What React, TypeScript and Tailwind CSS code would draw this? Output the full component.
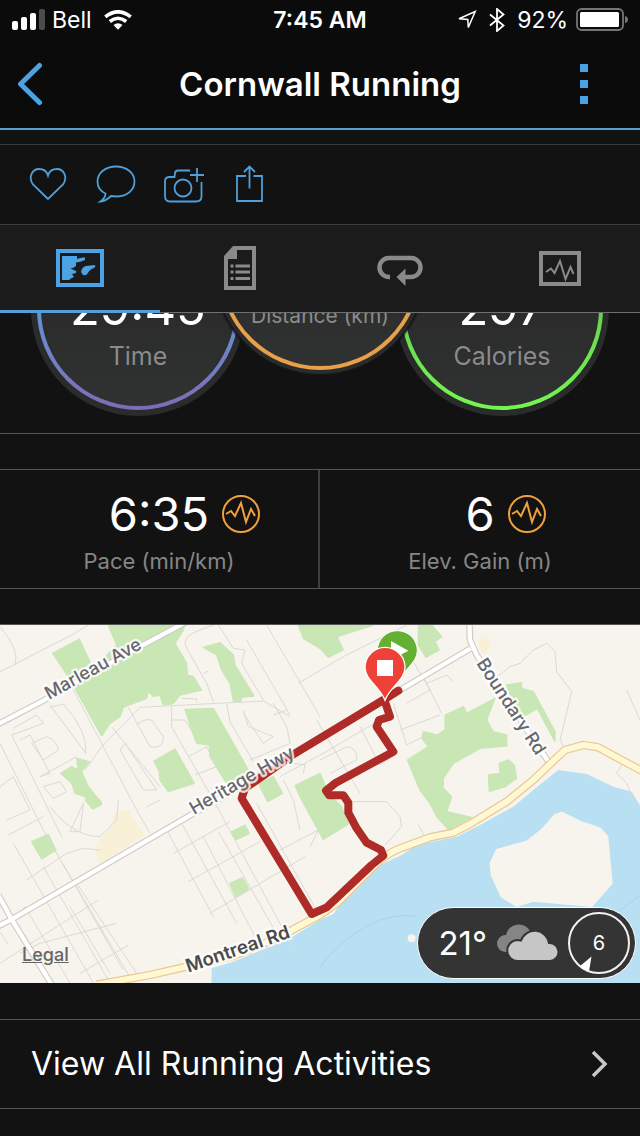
import { useState } from 'react'
import type { ReactNode } from 'react'
import { clsx } from 'clsx'

const PULSE_POINTS = '5,20 10,17 14,22 20,9 25,28 30,15 34,22'

const PARKS = [
  '158,100 238,57 272,130 205,170',
  '325,15 553,15 550,30 525,70 560,130 562,165 580,170 605,210 540,225 520,250 490,255 480,225 460,230 445,213 440,235 400,250 370,262 360,290 330,310 305,348 225,205 350,75',
  '610,82 660,68 700,105 705,135 762,228 725,232 722,245 700,243 690,190 665,150 650,105',
  '555,268 640,265 745,450 735,480 680,490 630,410 628,375 590,370 575,330',
  '462,423 525,387 583,490 505,515 480,480 478,455',
  '182,460 215,440 235,450 230,415 268,425 245,455 265,500 305,550 275,565 255,530 225,520 215,490',
  '775,490 820,470 848,520 803,545',
  '885,497 960,460 985,520 1025,560 1045,612 970,658 905,540',
  '895,15 1120,15 1012,50 1030,90 985,112 960,85 910,55',
  '1255,15 1295,15 1325,50 1305,65 1318,90 1278,112 1255,75',
  '1222,420 1285,380 1265,355 1270,335 1310,345 1335,330 1335,285 1390,260 1400,280 1485,235 1460,300 1480,335 1520,345 1520,378 1440,385 1360,430 1330,475 1330,505 1355,530 1340,575 1415,592 1345,628 1310,590 1290,550 1260,510',
  '1520,195 1565,188 1565,205 1600,215 1665,335 1665,365 1612,265 1570,290 1530,225',
  '1465,465 1500,460 1498,430 1525,420 1543,435 1550,475 1515,500 1468,515',
  '95,665 145,643 168,690 125,717',
  '255,540 300,540 305,553 280,567',
  '695,635 735,615 748,640 708,660',
  '690,790 728,773 747,808 707,830',
]

const STREETS = [
  'M0 155 L40 135 L215 45 L265 15',
  'M0 20 Q60 90 45 135',
  'M210 190 L410 570 L450 640',
  'M150 255 L258 400 Q262 330 190 252 L150 262',
  'M40 325 L110 285 L130 310 L35 345 L185 650',
  'M60 360 L90 345 L150 460 L120 470 L230 410',
  'M95 370 L140 350 Q170 360 175 390 L130 420 Z',
  'M255 450 L305 380 L420 262 L790 243 L870 290',
  'M335 320 L480 500',
  'M385 262 L450 380 Q490 390 490 350 L455 300 Q430 295 410 315',
  'M515 258 L515 320 L640 540 L880 985',
  'M515 300 L555 300 L580 340',
  'M360 390 L375 370 L470 510 L430 510 Z',
  'M0 370 L140 650 L400 1089',
  'M0 500 L40 470 L90 570 L20 600',
  'M130 500 L180 485 L200 515 L160 535 Z',
  'M560 85 Q540 50 600 30 L640 15',
  'M560 85 L620 190 L640 245',
  'M655 15 L700 85 L735 90 L725 130 L790 240',
  'M740 60 L870 285',
  'M800 15 L960 290',
  'M680 250 L690 305 L760 425',
  'M730 270 L745 320 L820 350 L790 370 L730 280',
  'M750 420 L870 370 L860 320 L820 250',
  'M820 285 L860 270',
  'M895 190 L1030 110 L1220 15',
  'M545 235 L590 237 L590 248',
  'M610 160 L625 153',
  'M565 410 L620 380 L650 440 L585 465',
  'M840 470 L970 400 L1140 300',
  'M850 480 L880 540 L900 630',
  'M880 430 L915 435 L910 460',
  'M950 300 L1080 520',
  'M960 420 L1040 380 Q1075 385 1070 420 L990 460',
  'M1080 320 L1140 435 L1170 415',
  'M1180 250 L1220 375 L1270 350',
  'M1200 330 L1320 285',
  'M1270 170 L1325 280',
  'M1220 250 L1290 210 L1240 125',
  'M1280 190 L1340 165 L1360 185',
  'M1480 180 L1530 140 L1560 130 L1600 90 L1640 70 L1665 95 L1670 155 L1715 215 L1680 360 L1690 380',
  'M1880 210 L1920 300',
  'M1865 435 L1850 460 L1880 490 L1900 540',
  'M1050 545 L1160 545 L1200 590 L1205 620 L1155 675',
  'M1255 615 L1275 650',
  'M25 645 L130 590',
  'M40 670 L100 775 L280 1089',
  'M80 780 L200 700 L250 685 L300 690',
  'M150 560 Q220 650 300 650 L350 600 L355 540',
  'M210 635 L250 550 L240 635 Z',
  'M130 740 L330 1089',
  'M185 725 L370 1050',
  'M75 860 L210 1089',
  'M40 910 L75 860',
  'M0 1030 L295 840',
  'M60 1000 L120 970 L350 910',
  'M240 1060 L385 975',
  'M210 860 L330 1060',
  'M230 790 L410 1060',
  'M0 935 L25 975',
  'M440 560 L480 540',
  'M520 700 L690 605',
  'M565 785 L780 665',
  'M630 880 L915 710',
  'M500 630 L640 890',
  'M545 610 L710 910',
  'M610 650 L770 960',
  'M655 635 L835 950',
  'M770 550 L960 890',
  'M840 690 L955 630 L930 680',
]

const ROUTE =
  'M1195 212 L1150 240 L885 400 L735 505 L725 535 L935 882 L980 862 L1115 735 L1150 707 L1143 690 L1100 668 L1070 625 L1045 578 L1045 548 L1030 526 L988 526 L978 512 L1005 490 L1180 395 L1130 320 L1137 300 L1170 290 L1155 245'

const MONTREAL_RD =
  'M290 1094 L450 1065 L550 1042 L700 1008 L830 955 L960 885 L1010 850 L1120 740 Q1160 700 1200 685 L1290 652 L1360 638 L1410 612 L1520 545 L1600 480 L1650 432 L1695 390 L1750 375 L1795 382 L1850 412 L1930 455'

const WHITE_ROADS = [
  'M-5 312 L130 242 L420 80 L560 5',
  'M-5 918 L35 898 L560 592 L740 490 L1150 240 L1412 85',
  'M-5 825 L35 898 L155 1094',
  'M1408 5 L1410 60 L1430 105 L1650 432',
]

function StatusBar() {
  return (
    <div className="grid grid-cols-[1fr_auto_1fr] items-center h-10 px-3 text-[23px] leading-7">
      <div className="flex items-center gap-1.5">
        <svg width="34" height="22" viewBox="0 0 34 22" aria-hidden="true">
          <rect x="0" y="12" width="6" height="9" rx="2" fill="#fff" />
          <rect x="9" y="8" width="6" height="13" rx="2" fill="#fff" />
          <rect x="18" y="4" width="6" height="17" rx="2" fill="#fff" />
          <rect x="27" y="0" width="6" height="21" rx="2" fill="#4c4c4c" />
        </svg>
        <span>Bell</span>
        <svg className="ml-1.5" width="28" height="20" viewBox="0 0 28 20" fill="none" stroke="#fff" strokeWidth="3.6" aria-hidden="true">
          <path d="M1.3 6.8 Q14 -3.2 26.7 6.8" />
          <path d="M5.8 11.5 Q14 5 22.2 11.5" />
          <path d="M9.5 15 Q14 11.5 18.5 15 L14 19.8 Z" fill="#fff" stroke="none" />
        </svg>
      </div>
      <span className="font-semibold">7:45 AM</span>
      <div className="flex items-center justify-end gap-2">
        <svg width="20" height="20" viewBox="0 0 20 20" fill="none" stroke="#fff" strokeWidth="1.5" aria-hidden="true">
          <path d="M18.2 1.5 L11.3 17.5 L10.8 9.5 L2 8.8 Z" />
        </svg>
        <svg width="24" height="24" viewBox="0 0 24 24" fill="none" stroke="#fff" strokeWidth="1.8" aria-hidden="true">
          <path d="M5 6.5 L18.5 17.5 L12 23 V1 L18.5 6.5 L5 17.5" />
        </svg>
        <span>92%</span>
        <svg width="52" height="24" viewBox="0 0 52 24" aria-hidden="true">
          <rect x="1" y="1" width="46" height="21" rx="4.5" fill="none" stroke="#757575" strokeWidth="1.8" />
          <rect x="4" y="4" width="39" height="15" rx="1.5" fill="#fff" />
          <path d="M49 8 Q52 9 52 11.5 Q52 14 49 15 Z" fill="#757575" />
        </svg>
      </div>
    </div>
  )
}

const ACTIONS: { label: string; icon: ReactNode }[] = [
  { label: 'Like', icon: <path d="M20 34 L5 19.500 C0 12.500 4 4 11 4 C16 4 19 7 20 10.500 C21 7 24 4 29 4 C36 4 40 12.500 35 19.500 Z" /> },
  {
    label: 'Comment',
    icon: <path d="M20 1.5 C30.500 1.5 38.500 8 38.500 16.500 C38.500 25 31 31.500 21 31.500 L15 31 C12 34 9 36 4.500 36.500 C8 34 9.500 31 9.500 28.500 C4 26 1.500 21.500 1.500 16.500 C1.500 8 9.500 1.5 20 1.5 Z" />,
  },
  {
    label: 'Add photo',
    icon: (
      <>
        <path d="M26 5.5 H14 Q11.500 5.5 11 8 L10.500 12 H5 Q1 12.500 1 16 V31 Q1 36.500 6 36.500 H32 Q37.500 36.500 37.500 31.500 V17" />
        <circle cx="19" cy="23" r="8.500" />
        <path d="M26 10 H40 M33 3 V17" />
      </>
    ),
  },
  {
    label: 'Share',
    icon: <path d="M14 11 H5 V36 H30 V11 H21.500 M17.500 23.500 V1.500 M12 7 L17.500 1.500 L23 7" />,
  },
]

const TABS: { label: string; icon: ReactNode }[] = [
  {
    label: 'Overview',
    icon: (
      <>
        <rect x="2" y="7" width="44" height="34" fill="none" stroke="currentColor" strokeWidth="4" />
        <path d="M6 12 H21 V15 Q25 13 29 13.5 V16 Q24 18 20 18.5 V22 Q17 24 14.5 24.5 L20 27 Q22 29 16 30 L18 33 Q15 34 13 36 H6 Z" fill="currentColor" />
        <path d="M39 21 Q40 23 38 24 Q33 26 32 29 Q30 32 27 31 L25 28 Q26 23 30 22 Z" fill="currentColor" />
      </>
    ),
  },
  {
    label: 'Details',
    icon: (
      <>
        <path d="M17 4 H38 V44 H10 V12" fill="none" stroke="currentColor" strokeWidth="4" />
        <path d="M8 12 L17 2 H21 V15 H8 Z" fill="currentColor" />
        <path d="M14.5 22 H17.5 M19.5 22 H34 M14.5 28 H17.5 M19.5 28 H34 M14.5 34.5 H17.5 M19.5 34.5 H34" stroke="currentColor" strokeWidth="3" />
      </>
    ),
  },
  {
    label: 'Laps',
    icon: (
      <>
        <path d="M14 33 H13 A9.5 9.5 0 0 1 13 14 H35 A9.5 9.5 0 0 1 35 33 H28" fill="none" stroke="currentColor" strokeWidth="4.5" />
        <path d="M20.5 33 L29.5 24.5 V42 Z" fill="currentColor" />
      </>
    ),
  },
  {
    label: 'Charts',
    icon: (
      <>
        <rect x="5" y="9" width="38" height="31" fill="none" stroke="currentColor" strokeWidth="4" />
        <polyline points="10,28 15,24.5 18.5,29 24,17 29.5,35 34.5,23 37.5,30" fill="none" stroke="currentColor" strokeWidth="2" />
      </>
    ),
  },
]

interface GaugeProps {
  value?: string
  label: string
  ring: string
  raised?: boolean
}

function Gauge({ value, label, ring, raised }: GaugeProps) {
  return (
    <div
      className={clsx(
        'shrink-0 rounded-full bg-[#2a2b2b]',
        raised ? 'relative z-10 size-[210px] p-1 -mx-[30px] mb-[42px] shadow-[0_0_2px_2px_#151515]' : 'size-[214px] p-1.5'
      )}
    >
      <div className={clsx('size-full rounded-full p-1', ring)}>
        <div className="size-full rounded-full bg-linear-to-b from-[#262626] to-[#303131] flex flex-col items-center justify-end pb-8">
          {value && <span className="text-[49px] leading-[60px]">{value}</span>}
          <span className={clsx('text-[#8b8b8b]', raised ? 'text-[21px] leading-9' : 'text-[25px] leading-9')}>{label}</span>
        </div>
      </div>
    </div>
  )
}

function Stat({ value, label }: { value: string; label: string }) {
  return (
    <div className="flex flex-col items-center pt-4 pb-3">
      <div className="relative text-[47px] leading-[56px]">
        {value}
        <button aria-label={`${label} chart`} className="absolute left-full top-2 ml-3">
          <svg width="40" height="40" viewBox="0 0 40 40" fill="none" stroke="#f0a03c" strokeWidth="2">
            <circle cx="20" cy="20" r="18" />
            <polyline points={PULSE_POINTS} />
          </svg>
        </button>
      </div>
      <div className="mt-1 text-[22px] leading-[30px] text-[#868686]">{label}</div>
    </div>
  )
}

function RouteMap() {
  return (
    <svg
      className="block size-full"
      viewBox="0 15 1920 1074"
      preserveAspectRatio="xMidYMid slice"
      role="img"
      aria-label="Route map"
    >
      <rect y="0" width="1920" height="1100" fill="#f7f4ee" />
      <g fill="#f9f0d8">
        <path d="M345 575 L385 570 L435 645 L300 732 L285 700 L290 670 L330 625 Z" />
        <path d="M1430 65 L1460 48 L1475 75 L1450 105 Z" />
      </g>
      <g fill="#c9e6b5" stroke="#c9e6b5" strokeWidth="4" strokeLinejoin="round">
        {PARKS.map((points) => (
          <polygon key={points} points={points} />
        ))}
      </g>
      <path
        d="M635 1094 L635 1045 L700 1025 L870 955 L960 900 L1000 882 L1060 800 L1130 740 L1205 705 L1250 675 L1370 650 L1440 615 L1540 560 L1600 510 L1675 450 L1760 462 L1840 500 L1895 515 L1925 565 L1925 1094 Z"
        fill="#b8dff2"
      />
      <path
        d="M1685 578 L1740 605 L1800 625 L1822 650 L1835 790 L1775 858 L1600 842 L1550 858 L1505 830 L1475 765 L1472 730 L1490 690 L1580 665 L1625 630 L1665 585 Z"
        fill="#f7f4ee"
        stroke="#f7f4ee"
        strokeWidth="6"
        strokeLinejoin="round"
      />
      <circle cx="1235" cy="955" r="12" fill="#f7f4ee" />
      <path d="M960 1040 Q1100 870 1250 888 M1860 870 L1925 822" fill="none" stroke="#abd2e6" strokeWidth="3" />

      <g fill="none" stroke="#dcd9d4" strokeWidth="3" strokeLinejoin="round">
        {STREETS.map((d) => (
          <path key={d} d={d} />
        ))}
      </g>
      <path d={WHITE_ROADS.join(' ')} fill="none" stroke="#cfccc8" strokeWidth="20" />
      <path d={WHITE_ROADS.join(' ')} fill="none" stroke="#ffffff" strokeWidth="13" />
      <path d={MONTREAL_RD} fill="none" stroke="#ecc48f" strokeWidth="25" strokeLinejoin="round" />
      <path d={MONTREAL_RD} fill="none" stroke="#fef8d3" strokeWidth="18" strokeLinejoin="round" />
      <path d={ROUTE} fill="none" stroke="#ae2b27" strokeWidth="24" strokeLinejoin="round" strokeLinecap="round" />

      <g fill="#66666b" stroke="#ffffff" strokeOpacity="0.8" strokeWidth="14" strokeLinejoin="round" paintOrder="stroke" fontSize="54" fontWeight="500">
        <text transform="translate(147 240) rotate(-29)">Marleau Ave</text>
        <text transform="translate(582 585) rotate(-30)">Heritage Hwy</text>
        <text transform="translate(1428 130) rotate(57)">Boundary Rd</text>
        <text transform="translate(565 1058) rotate(-19)" fill="#4a4a4c" fontSize="56" fontWeight="600">Montreal Rd</text>
      </g>

      {/* start and finish pins */}
      <path d="M1192 192 C1178 150 1132 130 1132 92 A60 60 0 0 1 1252 92 C1252 130 1206 150 1192 192 Z" fill="#64b032" stroke="#fff" strokeWidth="3" />
      <polygon points="1173,63 1225,92 1173,120" fill="#fff" />
      <path d="M1155 241 C1140 200 1095 180 1095 142 A60 60 0 0 1 1215 142 C1215 180 1170 200 1155 241 Z" fill="#ee4138" stroke="#fff" strokeWidth="4" />
      <rect x="1131" y="120" width="48" height="48" fill="#fff" />
    </svg>
  )
}

function WeatherBadge() {
  return (
    <div className="absolute right-1 bottom-1 flex items-center gap-2 h-[72px] pl-5 pr-1 rounded-full border border-white bg-[#343434]">
      <span className="text-[33px] leading-10">21°</span>
      <svg width="64" height="38" viewBox="0 0 64 38" aria-hidden="true">
        <path d="M10 28 A8.500 8.500 0 0 1 11 11 A13 13 0 0 1 36 9 V28 Z" fill="#858585" />
        <path d="M23 37 A10.500 10.500 0 0 1 22.500 16 Q24 16 26 16.500 A14.500 14.500 0 0 1 54 19 A9 9 0 0 1 55 37 Z" fill="#c6c6c6" stroke="#343434" strokeWidth="2" />
      </svg>
      <div className="relative flex items-center justify-center size-16 text-xl">
        <svg className="absolute inset-0" width="64" height="64" viewBox="0 0 64 64" aria-hidden="true">
          <circle cx="32" cy="32" r="30" fill="none" stroke="#f2f2f2" strokeWidth="2" />
          <path d="M24.500 45.500 L12.500 55.500 L22 60.500 Z" fill="#fff" />
        </svg>
        6
      </div>
    </div>
  )
}

export default function App() {
  const [activeTab, setActiveTab] = useState(0)

  return (
    <div className="min-h-screen bg-[#121212] text-white font-['Inter','Liberation_Sans',sans-serif]">
      <header className="bg-[#0b0b0b] border-b-2 border-[#549fd7]">
        <StatusBar />
        <div className="grid grid-cols-[112px_1fr_112px] items-center h-[88px]">
          <button aria-label="Back" className="pl-4">
            <svg width="28" height="44" viewBox="0 0 28 44" fill="none" stroke="#4ba3e3" strokeWidth="5" strokeLinecap="round" strokeLinejoin="round">
              <path d="M23.5 3.5 L4.5 22 L23.5 40.5" />
            </svg>
          </button>
          <h1 className="text-center text-[33px] leading-10 font-semibold">Cornwall Running</h1>
          <button aria-label="More options" className="flex flex-col items-center gap-2">
            <span className="size-2 bg-[#4ba3e3]" />
            <span className="size-2 bg-[#4ba3e3]" />
            <span className="size-2 bg-[#4ba3e3]" />
          </button>
        </div>
      </header>

      <div className="mt-3.5 flex items-center h-[81px] px-3.5 border-y border-[#3a3c3e]">
        {ACTIONS.map((action) => (
          <button key={action.label} aria-label={action.label} className="flex justify-center w-[68px]">
            <svg width="40" height="40" viewBox="0 0 40 40" fill="none" stroke="#4f9fd9" strokeWidth="1.8">
              {action.icon}
            </svg>
          </button>
        ))}
      </div>

      <nav className="grid grid-cols-4 h-[88px] bg-[#1b1b1b]">
        {TABS.map((tab, i) => (
          <button
            key={tab.label}
            aria-label={tab.label}
            onClick={() => setActiveTab(i)}
            className={clsx(
              'flex justify-center pt-[19px]',
              i === activeTab ? 'text-[#4ba3e3] border-b-3 border-[#549fd7]' : 'text-[#8a8a8a] border-b border-[#707070]'
            )}
          >
            <svg width="48" height="48" viewBox="0 0 48 48">
              {tab.icon}
            </svg>
          </button>
        ))}
      </nav>

      <section className="flex items-end justify-center h-[121px] pb-[17px] overflow-hidden border-b border-[#555555]">
        <Gauge value="29:45" label="Time" ring="bg-linear-to-b from-[#4ba3e3] from-30% to-[#7d6bb5]" />
        <Gauge label="Distance (km)" ring="bg-[#e8a04a]" raised />
        <Gauge value="297" label="Calories" ring="bg-linear-to-b from-[#5fc94f] from-30% to-[#76f650]" />
      </section>

      <section className="mt-[35px] grid grid-cols-2 divide-x-2 divide-[#3f3f3f] border-y border-[#555555]">
        <Stat value="6:35" label="Pace (min/km)" />
        <Stat value="6" label="Elev. Gain (m)" />
      </section>

      <section className="relative mt-[35px] h-[359px] border-t border-[#555555] overflow-hidden">
        <RouteMap />
        <a href="#legal" className="absolute left-[22px] bottom-4 text-lg leading-6 font-medium text-[#666666] underline">
          Legal
        </a>
        <WeatherBadge />
      </section>

      <a href="#activities" className="mt-9 flex items-center justify-between h-[90px] pl-[31px] pr-8 border-y border-[#555555]">
        <span className="text-[32px] leading-10">View All Running Activities</span>
        <svg width="18" height="28" viewBox="0 0 18 28" fill="none" stroke="#c8c8c8" strokeWidth="3.5" aria-hidden="true">
          <path d="M3 2 L15 14 L3 26" />
        </svg>
      </a>
    </div>
  )
}
